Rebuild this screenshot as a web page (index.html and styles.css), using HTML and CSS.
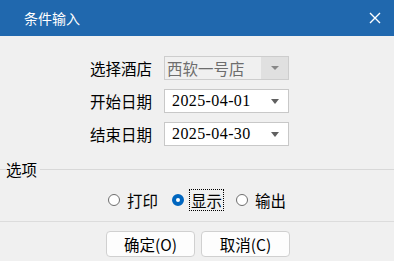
FILE: index.html
```html
<!DOCTYPE html>
<html lang="zh">
<head>
<meta charset="utf-8">
<link rel="stylesheet" href="styles.css">
</head>
<body>
<div class="dialog">
  <div class="titlebar">
    <span class="title">条件输入</span>
    <svg class="close" width="12" height="12" viewBox="0 0 12 12"><path d="M1 1 L11 11 M11 1 L1 11" stroke="#fff" stroke-width="1.4" fill="none"/></svg>
  </div>
  <div class="form">
    <div class="row">
      <span class="label">选择酒店</span>
      <div class="select disabled">
        <span class="value cjk">西软一号店</span>
        <span class="drop"><span class="arrow"></span></span>
      </div>
    </div>
    <div class="row">
      <span class="label">开始日期</span>
      <div class="select">
        <span class="value date">2025-04-01</span>
        <span class="drop"><span class="arrow"></span></span>
      </div>
    </div>
    <div class="row">
      <span class="label">结束日期</span>
      <div class="select">
        <span class="value date">2025-04-30</span>
        <span class="drop"><span class="arrow"></span></span>
      </div>
    </div>
  </div>
  <div class="group">
    <span class="line short"></span>
    <span class="legend">选项</span>
    <span class="line"></span>
  </div>
  <div class="radios">
    <label class="radio"><span class="dot"></span><span class="rtext">打印</span></label>
    <label class="radio checked"><span class="dot"></span><span class="rtext focus">显示</span></label>
    <label class="radio"><span class="dot"></span><span class="rtext">输出</span></label>
  </div>
  <div class="sep"></div>
  <div class="buttons">
    <button class="btn">确定(O)</button>
    <button class="btn">取消(C)</button>
  </div>
</div>
</body>
</html>
```

FILE: styles.css
```css
* { box-sizing: border-box; }
html, body { margin: 0; padding: 0; }
body {
  width: 394px;
  height: 261px;
  background: #f0f0f0;
  font-family: "Noto Sans CJK SC", "Noto Sans", sans-serif;
  color: #000;
  overflow: hidden;
}
.dialog { display: flex; flex-direction: column; }
.titlebar {
  height: 36px;
  background: #2068ae;
  display: flex;
  align-items: center;
  justify-content: space-between;
  padding: 0 13px 0 24px;
}
.title { color: #fff; font-size: 14px; line-height: 36px; }
.close { display: block; }
.form {
  display: flex;
  flex-direction: column;
  gap: 9px;
  padding: 20px 0 0 90px;
}
.row { display: flex; align-items: center; height: 24px; }
.label { width: 74px; font-size: 15.5px; line-height: 24px; }
.select {
  width: 125px;
  height: 24px;
  border: 1px solid #c8c8c8;
  background: #fff;
  display: flex;
  align-items: center;
}
.select .value { flex: 1; font-size: 16px; line-height: 22px; }
.value.cjk { padding-left: 2px; color: #6d6d6d; letter-spacing: 0; font-size: 15.5px; }
.value.date { font-family: "Liberation Serif", serif; padding-left: 7px; letter-spacing: 0.4px; }
.select.disabled { background: #f0f0f0; border-color: #cdcdcd; }
.drop {
  width: 27px;
  height: 22px;
  display: flex;
  align-items: center;
  justify-content: center;
}
.disabled .drop { background: #e0e0e0; }
.arrow {
  width: 0; height: 0;
  border-left: 4.5px solid transparent;
  border-right: 4.5px solid transparent;
  border-top: 5px solid #606060;
}
.disabled .arrow { border-left-width: 4px; border-right-width: 4px; border-top: 4px solid #888; }
.group {
  display: flex;
  align-items: center;
  margin-top: 13px;
  height: 20px;
}
.line { flex: 1; height: 1px; background: #d8d8d8; }
.line.short { flex: 0 0 6px; }
.legend { font-size: 15.5px; line-height: 20px; padding: 0 3px 0 0; }
.radios {
  display: flex;
  justify-content: center;
  gap: 12px;
  margin-top: 10px;
  height: 22px;
  align-items: center;
  padding-left: 2px;
}
.radio { display: flex; align-items: center; gap: 5px; font-size: 15.5px; }
.dot {
  width: 12px; height: 12px;
  border-radius: 50%;
  border: 1px solid #6e6e6e;
  background: #fff;
}
.checked .dot {
  border: 4px solid #0066bf;
  background: #fff;
}
.rtext { line-height: 20px; padding: 0 1px; border: 1px dotted transparent; }
.rtext.focus { border-color: #000; }
.sep { height: 1px; background: #dcdcdc; margin-top: 10px; }
.buttons {
  display: flex;
  justify-content: center;
  gap: 6px;
  margin-top: 9px;
  padding-left: 2px;
}
.btn {
  width: 89px;
  height: 26px;
  background: #fdfdfd;
  border: 1px solid #d0d0d0;
  border-radius: 4px;
  font-family: "Noto Sans CJK SC", sans-serif;
  font-size: 15.5px;
  line-height: 22px;
  padding: 0;
  color: #000;
}
```
